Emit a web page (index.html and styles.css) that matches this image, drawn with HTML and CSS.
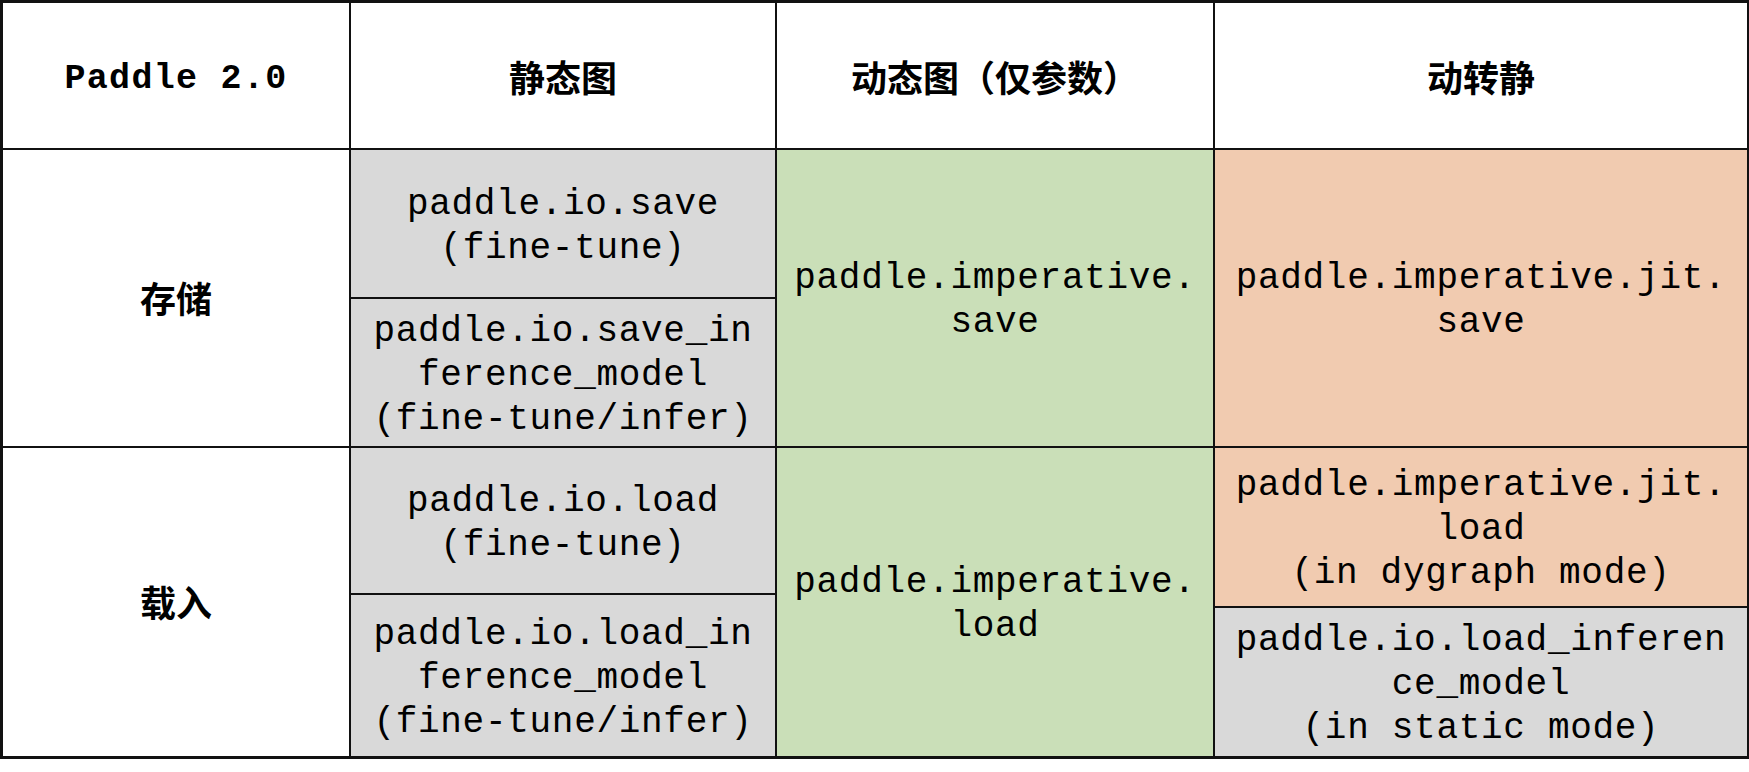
FILE: index.html
```html
<!DOCTYPE html>
<html lang="zh">
<head>
<meta charset="utf-8">
<title>Paddle 2.0</title>
<link rel="stylesheet" href="styles.css">
</head>
<body>
<div class="table">
  <div class="cell head mono-b c1 r-h">Paddle 2.0</div>
  <div class="cell head cjk c2 r-h">静态图</div>
  <div class="cell head cjk c3 r-h">动态图（仅参数）</div>
  <div class="cell head cjk c4 r-h">动转静</div>

  <div class="cell label cjk c1 r-save">存储</div>
  <div class="cell gray mono c2 r-s1">paddle.io.save<br>(fine-tune)</div>
  <div class="cell gray mono c2 r-s2">paddle.io.save_in<br>ference_model<br>(fine-tune/infer)</div>
  <div class="cell green mono c3 r-save">paddle.imperative.<br>save</div>
  <div class="cell orange mono c4 r-save">paddle.imperative.jit.<br>save</div>

  <div class="cell label cjk c1 r-load">载入</div>
  <div class="cell gray mono c2 r-l1">paddle.io.load<br>(fine-tune)</div>
  <div class="cell gray mono c2 r-l2">paddle.io.load_in<br>ference_model<br>(fine-tune/infer)</div>
  <div class="cell green mono c3 r-load">paddle.imperative.<br>load</div>
  <div class="cell orange mono c4 r-j1">paddle.imperative.jit.<br>load<br>(in dygraph mode)</div>
  <div class="cell gray mono c4 r-j2">paddle.io.load_inferen<br>ce_model<br>(in static mode)</div>
</div>
</body>
</html>
```

FILE: styles.css
```css
html, body {
  margin: 0;
  padding: 0;
  background: #ffffff;
}

.table {
  box-sizing: border-box;
  width: 1749px;
  display: grid;
  grid-template-columns: 346px 424px 436px 1fr;
  grid-template-rows: 145px 147px 147px 145px 11px 148px;
  gap: 2px;
  padding: 3px 2px 3px 3px;
  background: #111111;
}

.cell {
  display: flex;
  align-items: center;
  justify-content: center;
  text-align: center;
  color: #000000;
  white-space: nowrap;
  background: #ffffff;
}

.c1 { grid-column: 1; }
.c2 { grid-column: 2; }
.c3 { grid-column: 3; }
.c4 { grid-column: 4; }

.r-h { grid-row: 1; }
.r-save { grid-row: 2 / 4; }
.r-s1 { grid-row: 2; }
.r-s2 { grid-row: 3; }
.r-load { grid-row: 4 / 7; }
.r-l1 { grid-row: 4; }
.r-l2 { grid-row: 5 / 7; }
.r-j1 { grid-row: 4 / 6; }
.r-j2 { grid-row: 6; }

.gray { background: #d9d9d9; }
.green { background: #cadfb8; }
.orange { background: #f1cbb0; }

.mono {
  font-family: "Liberation Mono", "DejaVu Sans Mono", monospace;
  font-size: 36px;
  letter-spacing: 0.7px;
  line-height: 44px;
  padding-top: 6px;
}

.mono-b {
  font-family: "Liberation Mono", "DejaVu Sans Mono", monospace;
  font-weight: bold;
  font-size: 35px;
  letter-spacing: 1.3px;
  padding-top: 6px;
}

.cjk {
  font-family: "Noto Sans CJK SC", "Noto Sans", sans-serif;
  font-weight: bold;
  font-size: 36px;
}

.label {
  padding-bottom: 2px;
}
```
